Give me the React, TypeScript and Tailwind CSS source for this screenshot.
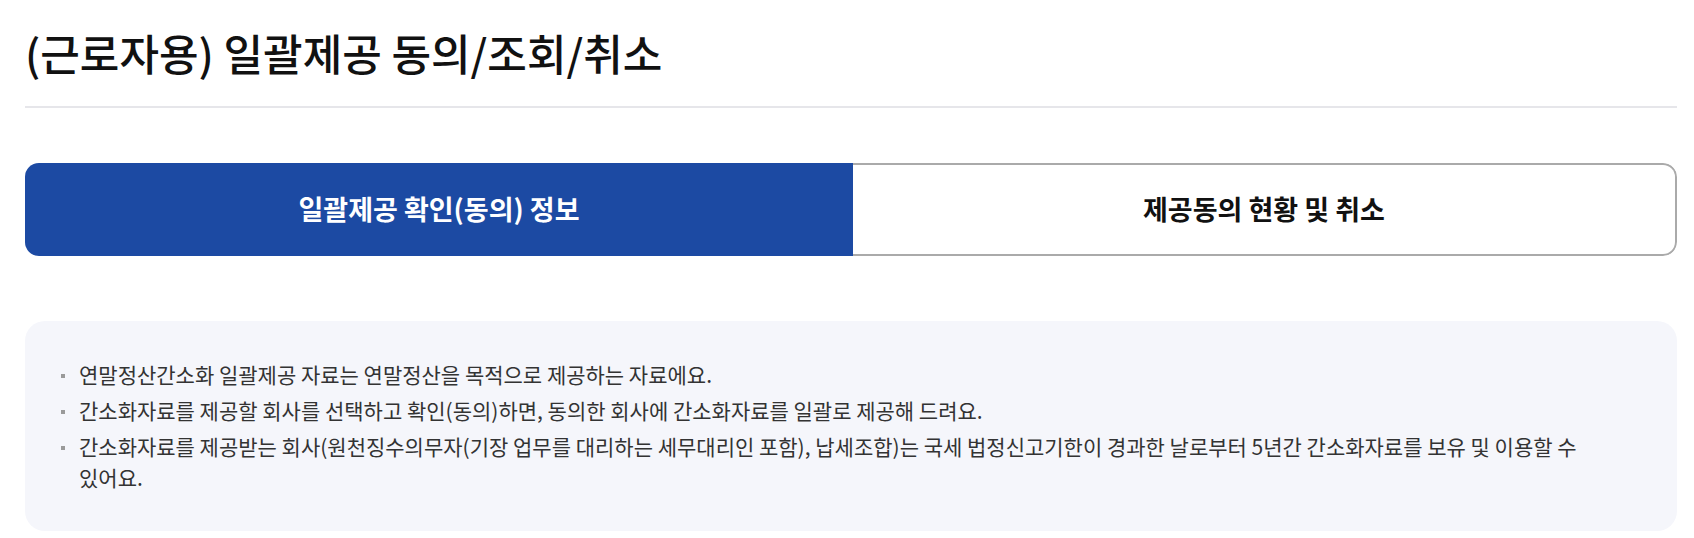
export default function App() {
  const notes = [
    "연말정산간소화 일괄제공 자료는 연말정산을 목적으로 제공하는 자료에요.",
    "간소화자료를 제공할 회사를 선택하고 확인(동의)하면, 동의한 회사에 간소화자료를 일괄로 제공해 드려요.",
    "간소화자료를 제공받는 회사(원천징수의무자(기장 업무를 대리하는 세무대리인 포함), 납세조합)는 국세 법정신고기한이 경과한 날로부터 5년간 간소화자료를 보유 및 이용할 수 있어요.",
  ];

  return (
    <div
      className="min-h-[538px] bg-white pr-[17px] pl-[25px] text-[#222]"
      style={{ fontFamily: '"Noto Sans CJK KR", "Noto Sans", sans-serif' }}
    >
      {/* 제목 */}
      <h1 className="border-b-2 border-[#e6e6ea] pt-[24px] pb-[26px] text-[43px] leading-[56px] font-medium text-[#111]">
        (근로자용) 일괄제공 동의/조회/취소
      </h1>

      {/* 탭 */}
      <div className="mt-[55px] flex h-[93px] overflow-hidden rounded-[14px]">
        <button className="flex w-[828px] items-center justify-center bg-[#1c4aa3] text-[27px] font-bold text-white">
          일괄제공 확인(동의) 정보
        </button>
        <button className="flex flex-1 items-center justify-center rounded-r-[14px] border-2 border-l-0 border-[#aaaaaa] bg-white text-[27px] font-bold text-[#111]">
          제공동의 현황 및 취소
        </button>
      </div>

      {/* 안내 */}
      <div className="mt-[65px] rounded-[20px] bg-[#f5f6fb] pt-[38px] pr-[60px] pb-[38px] pl-[36px]">
        <ul className="flex flex-col gap-[5px]">
          {notes.map((note) => (
            <li key={note} className="flex text-[21px] leading-[31px] break-keep text-[#333]">
              <span className="mt-[15px] mr-[14px] h-[4px] w-[4px] shrink-0 bg-[#9a9a9a]" />
              <span>{note}</span>
            </li>
          ))}
        </ul>
      </div>
    </div>
  );
}
